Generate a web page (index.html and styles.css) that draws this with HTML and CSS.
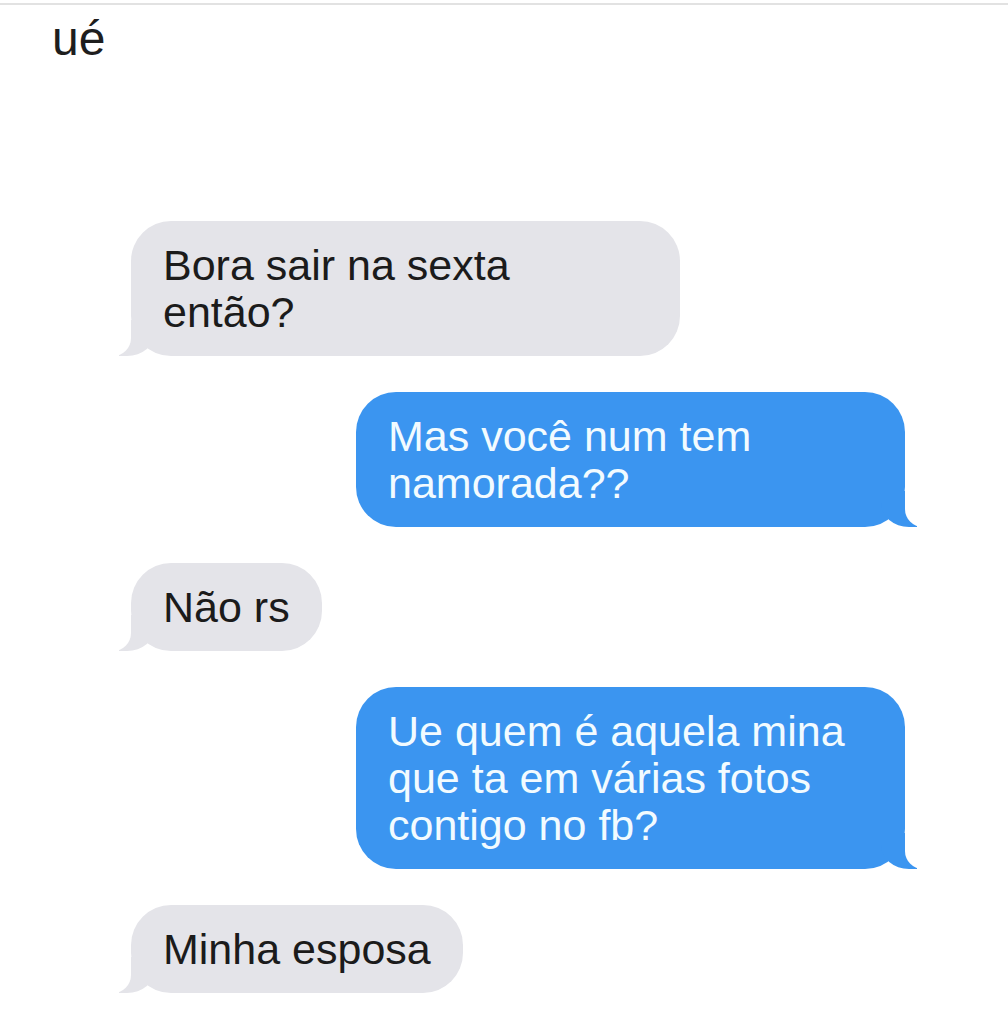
FILE: index.html
```html
<!DOCTYPE html>
<html lang="pt-BR">
<head>
  <meta charset="UTF-8">
  <meta name="viewport" content="width=device-width, initial-scale=1.0">
  <title>ué</title>
  <link rel="stylesheet" href="styles.css">
</head>
<body>
  <div class="top-rule"></div>
  <h1 class="caption">ué</h1>

  <div class="chat">
    <div class="bubble them">Bora sair na sexta então?</div>
    <div class="bubble me">Mas você num tem namorada??</div>
    <div class="bubble them">Não rs</div>
    <div class="bubble me">Ue quem é aquela mina que ta em várias fotos contigo no fb?</div>
    <div class="bubble them">Minha esposa</div>
  </div>
</body>
</html>
```

FILE: styles.css
```css
body {
  font-family: "Liberation Sans", Arial, sans-serif;
  background-color: #fff;
  margin: 0;
  padding: 0;
}

.top-rule {
  margin-top: 3px;
  height: 2px;
  background-color: #e2e2e2;
}

.caption {
  margin: 10px 0 0 52px;
  font-size: 48px;
  line-height: 48px;
  font-weight: normal;
  color: #1e1e1e;
}

.chat {
  display: flex;
  flex-direction: column;
  gap: 36px;
  padding-top: 158px;
}

.bubble {
  position: relative;
  max-width: 549px;
  box-sizing: border-box;
  padding: 20.5px 32px;
  border-radius: 40px;
  font-size: 43px;
  line-height: 47px;
}

.bubble::before,
.bubble::after {
  content: "";
  position: absolute;
  bottom: 0;
  height: 36px;
}

/* grey bubbles on the left */
.them {
  align-self: flex-start;
  margin-left: 131px;
  background-color: #e4e4e9;
  color: #1b1b1b;
}

.them::before {
  left: -12px;
  width: 36px;
  background-color: #e4e4e9;
  border-bottom-right-radius: 28px 24px;
}

.them::after {
  left: -30px;
  width: 30px;
  background-color: #fff;
  border-bottom-right-radius: 18px;
}

/* blue bubbles on the right */
.me {
  align-self: flex-end;
  margin-right: 103px;
  background-color: #3b95f0;
  color: #f2fbff;
}

.me::before {
  right: -12px;
  width: 36px;
  background-color: #3b95f0;
  border-bottom-left-radius: 28px 24px;
}

.me::after {
  right: -30px;
  width: 30px;
  background-color: #fff;
  border-bottom-left-radius: 18px;
}
```
